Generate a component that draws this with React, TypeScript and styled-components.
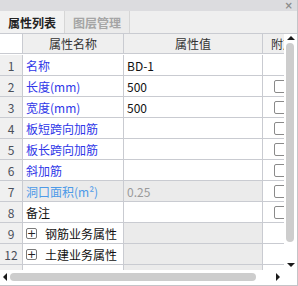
import styled, { createGlobalStyle } from 'styled-components'

const GlobalStyle = createGlobalStyle`
  html, body {
    margin: 0;
    padding: 0;
    background: #ffffff;
  }
  body {
    font-family: "Noto Sans CJK SC", "Noto Sans", sans-serif;
    font-size: 12px;
  }
`

const Panel = styled.div`
  width: 298px;
  height: 286px;
  box-sizing: border-box;
  border-right: 1px solid #c4c4c8;
  border-bottom: 1px solid #c4c4c8;
  display: flex;
  flex-direction: column;
  overflow: hidden;
  background: #ffffff;
`

const TitleBar = styled.div`
  height: 11px;
  flex: none;
  background: #dcdcdf;
  display: flex;
  justify-content: flex-end;
  align-items: center;
  padding-right: 4px;
`

const CloseMark = styled.span`
  font-family: "DejaVu Sans", sans-serif;
  font-size: 10px;
  font-weight: bold;
  line-height: 10px;
  color: #8c8c8c;
`

const TabStrip = styled.div`
  height: 23px;
  flex: none;
  box-sizing: border-box;
  background: #efefef;
  border-bottom: 1px solid #c9cbd1;
  display: flex;
`

const Tab = styled.div<{ $active?: boolean }>`
  width: 65px;
  box-sizing: border-box;
  border-right: 1px solid #d6d6d6;
  display: flex;
  align-items: center;
  justify-content: center;
  font-size: 12px;
  font-weight: 700;
  color: ${p => (p.$active ? '#222222' : '#a5a5a5')};
  background: ${p => (p.$active ? '#f2f2f2' : '#ebebeb')};
`

const Body = styled.div`
  display: flex;
  height: 236px;
  flex: none;
`

const Viewport = styled.div`
  width: 284px;
  flex: none;
  overflow: hidden;
`

const Grid = styled.div`
  display: grid;
  grid-template-columns: 23px 101px 139px 40px;
  grid-auto-rows: 21px;
  width: 303px;
`

const HeadCell = styled.div<{ $blank?: boolean }>`
  height: 20px;
  box-sizing: border-box;
  border-right: 1px solid #c9cbd1;
  border-bottom: 1px solid #c9cbd1;
  background: ${p => (p.$blank ? '#ffffff' : '#efefef')};
  color: #333333;
  display: flex;
  align-items: center;
  justify-content: center;
  white-space: nowrap;
  overflow: hidden;
`

const HeadCellLeft = styled(HeadCell)`
  justify-content: flex-start;
  padding-left: 8px;
`

const NumCell = styled.div`
  box-sizing: border-box;
  border-right: 1px solid #c9cbd1;
  border-bottom: 1px solid #c9cbd1;
  background: #f0f0f0;
  color: #4a4f5a;
  display: flex;
  align-items: center;
  justify-content: center;
`

const Cell = styled.div<{ $gray?: boolean; $color?: string }>`
  box-sizing: border-box;
  border-right: 1px solid #c9cbd1;
  border-bottom: 1px solid #c9cbd1;
  background: ${p => (p.$gray ? '#ebebeb' : '#ffffff')};
  color: ${p => p.$color || '#111111'};
  display: flex;
  align-items: center;
  padding-left: 3px;
  white-space: nowrap;
  overflow: hidden;
`

const AttachCell = styled(Cell)`
  padding-left: 11px;
`

const Check = styled.span`
  width: 13px;
  height: 13px;
  box-sizing: border-box;
  border: 1px solid #8a8a8a;
  border-radius: 2px;
  background: #ffffff;
  flex: none;
`

const PlusBox = styled.span`
  width: 11px;
  height: 11px;
  box-sizing: border-box;
  border: 1px solid #7a7a7a;
  border-radius: 2px;
  margin-right: 8px;
  flex: none;
  display: flex;
  align-items: center;
  justify-content: center;
  font-family: "DejaVu Sans", sans-serif;
  font-size: 11px;
  line-height: 9px;
  color: #222222;
`

const VScroll = styled.div`
  width: 13px;
  flex: none;
  display: flex;
  flex-direction: column;
  align-items: center;
  padding-top: 2px;
  box-sizing: border-box;
  background: #ffffff;
`

const ArrowUp = styled.span`
  width: 0;
  height: 0;
  border-left: 4px solid transparent;
  border-right: 4px solid transparent;
  border-bottom: 4px solid #1a1a1a;
  margin-bottom: 3px;
`

const ArrowDown = styled.span`
  width: 0;
  height: 0;
  border-left: 4px solid transparent;
  border-right: 4px solid transparent;
  border-top: 4px solid #1a1a1a;
  margin-top: 21px;
`

const VThumb = styled.div`
  width: 8px;
  height: 199px;
  border-radius: 4px;
  background: #cdcdcd;
  margin-right: 1px;
`

const HScrollRow = styled.div`
  display: flex;
  height: 14px;
  flex: none;
  align-items: center;
`

const HScroll = styled.div`
  width: 284px;
  display: flex;
  align-items: center;
  padding-left: 3px;
  box-sizing: border-box;
`

const ArrowLeft = styled.span`
  width: 0;
  height: 0;
  border-top: 4px solid transparent;
  border-bottom: 4px solid transparent;
  border-right: 4px solid #1a1a1a;
  margin-right: 3px;
`

const ArrowRight = styled.span`
  width: 0;
  height: 0;
  border-top: 4px solid transparent;
  border-bottom: 4px solid transparent;
  border-left: 4px solid #1a1a1a;
  margin-left: 20px;
`

const HThumb = styled.div`
  width: 246px;
  height: 8px;
  border-radius: 4px;
  background: #cdcdcd;
`

type Row = {
  n: string
  name: string
  value?: string
  color?: string
  valueColor?: string
  gray?: boolean
  check?: boolean
  group?: boolean
}

const BLUE = '#2f37e8'

const rows: Row[] = [
  { n: '1', name: '名称', value: 'BD-1', color: BLUE },
  { n: '2', name: '长度(mm)', value: '500', color: BLUE, check: true },
  { n: '3', name: '宽度(mm)', value: '500', color: BLUE, check: true },
  { n: '4', name: '板短跨向加筋', color: BLUE, check: true },
  { n: '5', name: '板长跨向加筋', color: BLUE, check: true },
  { n: '6', name: '斜加筋', color: BLUE, check: true },
  { n: '7', name: '洞口面积(m²)', value: '0.25', color: '#4d9ae8', valueColor: '#9a9a9a', gray: true, check: true },
  { n: '8', name: '备注', check: true },
  { n: '9', name: '钢筋业务属性', group: true },
  { n: '12', name: '土建业务属性', group: true },
  { n: '17', name: '显示样式', group: true },
]

export default function App() {
  return (
    <>
      <GlobalStyle />
      <Panel>
        <TitleBar>
          <CloseMark>×</CloseMark>
        </TitleBar>
        <TabStrip>
          <Tab $active>属性列表</Tab>
          <Tab>图层管理</Tab>
        </TabStrip>
        <Body>
          <Viewport>
            <Grid>
              <HeadCell $blank />
              <HeadCell>属性名称</HeadCell>
              <HeadCell>属性值</HeadCell>
              <HeadCellLeft>附加</HeadCellLeft>
              {rows.map(r => (
                <Row key={r.n} r={r} />
              ))}
            </Grid>
          </Viewport>
          <VScroll>
            <ArrowUp />
            <VThumb />
            <ArrowDown />
          </VScroll>
        </Body>
        <HScrollRow>
          <HScroll>
            <ArrowLeft />
            <HThumb />
            <ArrowRight />
          </HScroll>
        </HScrollRow>
      </Panel>
    </>
  )
}

function Row({ r }: { r: Row }) {
  return (
    <>
      <NumCell>{r.n}</NumCell>
      <Cell $gray={r.gray} $color={r.group ? '#111111' : r.color}>
        {r.group && <PlusBox>+</PlusBox>}
        {r.name}
      </Cell>
      <Cell $gray={r.gray || r.group} $color={r.valueColor}>
        {r.value}
      </Cell>
      <AttachCell>{r.check && <Check />}</AttachCell>
    </>
  )
}
